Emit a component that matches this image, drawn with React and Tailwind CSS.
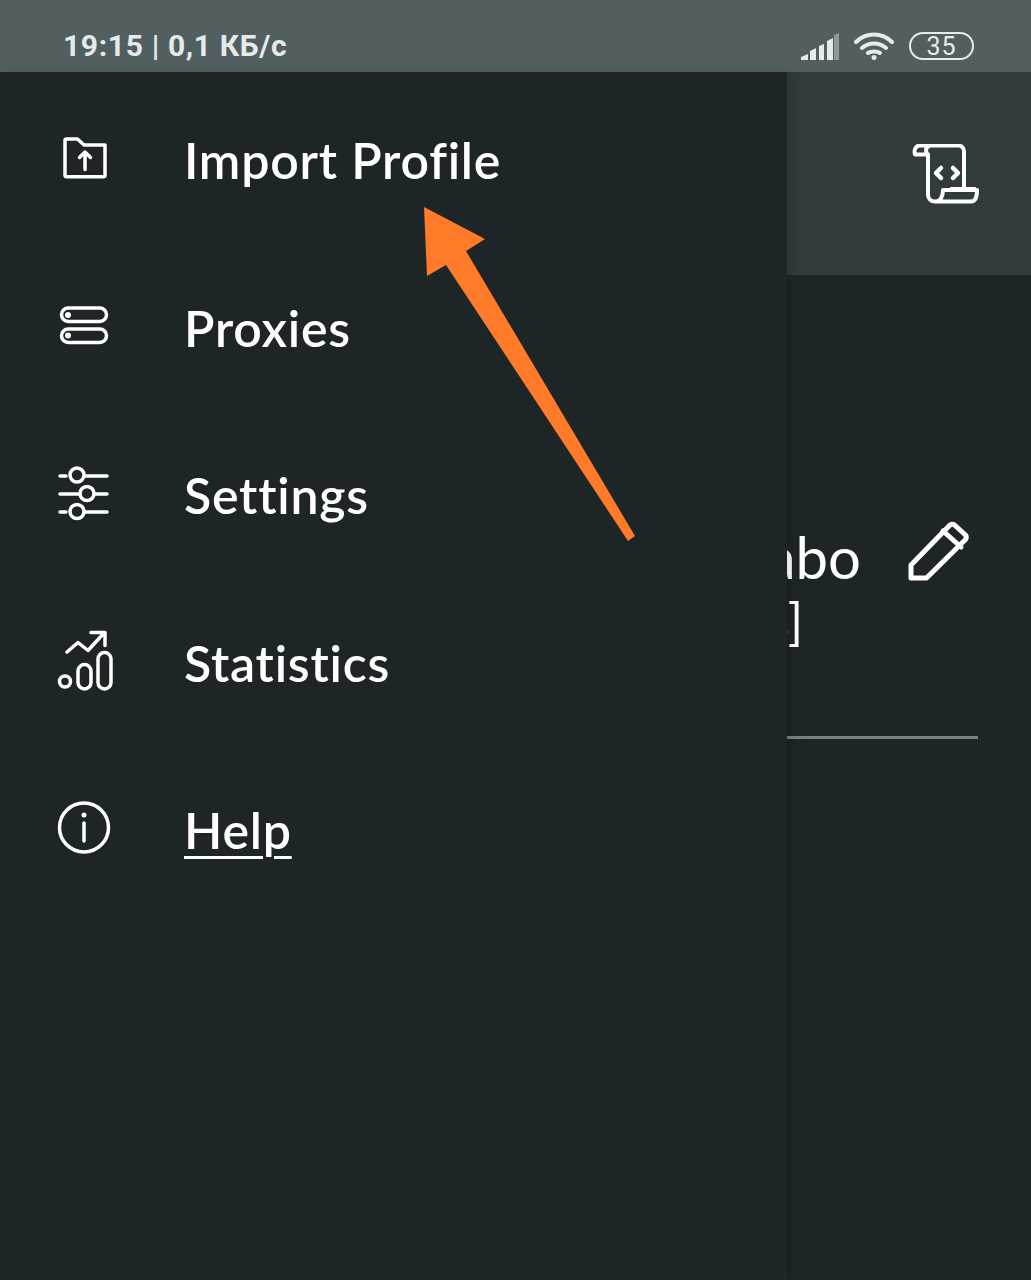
const Icon = ({ box, children }) => (
  <svg viewBox={box} className="w-[70px] h-[70px]" fill="none" stroke="#fff" strokeWidth="3.5" strokeLinecap="round" strokeLinejoin="round">
    {children}
  </svg>
);

const menuItems = [
  {
    label: 'Import Profile',
    icon: (
      <Icon box="50 127 70 70">
        <path d="M65 140.500c0-.8.6-1.500 1.500-1.500h11l6.500 6h21v30c0 1-.7 1.800-1.700 1.800H66.700c-1 0-1.700-.8-1.700-1.800z" />
        <path d="M85 169.500v-17M79.500 157.500l5.500-5.500 5.500 5.500" />
      </Icon>
    )
  },
  {
    label: 'Proxies',
    icon: (
      <Icon box="50 294.500 70 70">
        <rect x="61.500" y="307.500" width="45" height="13.500" rx="6.750" />
        <rect x="61.500" y="328.500" width="45" height="13.500" rx="6.750" />
        <circle cx="68" cy="314.500" r="3" fill="#fff" stroke="none" />
        <circle cx="68" cy="335" r="3" fill="#fff" stroke="none" />
      </Icon>
    )
  },
  {
    label: 'Settings',
    icon: (
      <Icon box="50 462 70 70">
        <path d="M60 476h6M85 476h22M60 494h19M95 494h12M60 512h6M85 512h22" />
        <circle cx="77" cy="475" r="7" />
        <circle cx="87" cy="493.500" r="7" />
        <circle cx="77" cy="511.500" r="7" />
      </Icon>
    )
  },
  {
    label: 'Statistics',
    icon: (
      <Icon box="50 629.500 70 70">
        <circle cx="65" cy="681" r="5.500" />
        <rect x="78" y="664" width="13" height="24.500" rx="6.500" />
        <rect x="98" y="652" width="13" height="36.500" rx="6.500" />
        <path d="M67 651.500l11-9.500 10 8 16.500-18M91 632h14v13" />
      </Icon>
    )
  },
  {
    label: 'Help',
    underline: true,
    icon: (
      <Icon box="50 797 70 70">
        <circle cx="84" cy="827.500" r="24.500" />
        <path d="M84 823v18" />
        <circle cx="84" cy="815" r="2.500" fill="#fff" stroke="none" />
      </Icon>
    )
  }
];

const App = () => {
  return (
    <div className="relative w-[1031px] h-[1280px] overflow-hidden bg-[#1e2527] text-white font-['Lato',sans-serif]">
      {/* status bar */}
      <div className="h-[72px] bg-[#525f60] flex items-center justify-between pt-[20px] pl-[63px] pr-[57px] text-[#e6eaea]">
        <span className="font-['Roboto',sans-serif] font-bold text-[30px] leading-none tracking-[0.65px]">19:15 | 0,1 КБ/с</span>
        <div className="flex items-center gap-[15px]">
          <svg viewBox="0 0 38 27" className="w-[38px] h-[27px]" fill="#e6eaea">
            <path d="M0 27v-3l7-3v6zM9 27v-9l6-3v12zM18 27V13l5-2v16zM26 27V8l6-3v22z" />
            <path d="M33 27V2l5-2v27z" fill="#8f9a9a" />
          </svg>
          <svg viewBox="0 0 40 28" className="w-[40px] h-[28px]" fill="none" stroke="#e6eaea" strokeWidth="4" strokeLinecap="round">
            <path d="M2 10c10-10 26-10 36 0M8 16c7-6 17-6 24 0M14 21c3-2 9-2 12 0" />
            <circle cx="20" cy="25.500" r="2.500" fill="#e6eaea" stroke="none" />
          </svg>
          <div className="w-[65px] h-[28px] border-2 border-[#e6eaea] rounded-full flex items-center justify-center font-['Roboto',sans-serif] text-[25px] leading-none tracking-[1px]">35</div>
        </div>
      </div>

      <div className="flex h-[1208px]">
        {/* drawer */}
        <nav className="w-[787px] shrink-0 pt-[6.5px] z-10 bg-[#1e2527] shadow-[4px_0_10px_rgba(0,0,0,0.12)]">
          {menuItems.map((item) => (
            <div key={item.label} className="h-[167.5px] flex items-center">
              <div className="w-[185px] pl-[50px] shrink-0">{item.icon}</div>
              <span className={`text-[50px] leading-none font-semibold tracking-[0.8px] -ml-[1px] -mt-[4px] ${item.underline ? 'underline underline-offset-[7px] decoration-[3px]' : ''}`}>{item.label}</span>
            </div>
          ))}
        </nav>

        {/* page behind the drawer */}
        <div className="flex-1 min-w-0 overflow-hidden">
          <div className="h-[203px] bg-[#313a3c] flex items-center justify-end pr-[52px]">
            <svg viewBox="912 144 67 60" className="w-[67px] h-[60px]" fill="none" stroke="#fff" strokeWidth="4" strokeLinecap="round" strokeLinejoin="round">
              <path d="M928 154.500h-13c-1.500-5 1-9 5-9h38c4 0 6 3 6 6v37" />
              <path d="M928 147c-3 0-2 7 0 7.500v40c0 4 3 7 7 7h36c4 0 6-4 6-11.500h-34c0 7-3 11.500-7 11.500" />
              <path d="M951 188h24" strokeWidth="2" />
              <path d="M941 168l-5 5 5 5M953 168l5 5-5 5" strokeWidth="4.5" />
            </svg>
          </div>
          <div className="pt-[246px] pr-[53px]">
            <div className="flex justify-between items-start h-[218px] border-b-[3px] border-[#7b7f80]">
              <div className="text-[58px] font-normal leading-[66px] whitespace-nowrap mt-[3px]">
                <div className="w-[74px] flex justify-end">abo</div>
                <div className="w-[16px] flex justify-end text-[50px] font-normal -mt-[2px]">s]</div>
              </div>
              <svg viewBox="908 521 61 60" className="w-[61px] h-[60px] mr-[9px]" fill="none" stroke="#fff" strokeWidth="5" strokeLinecap="round" strokeLinejoin="round">
                <path d="M911 578v-13l39-40c1.500-1 3-1 4.500 0l11 10c1 1.500 1 3 0 4.500l-39 38.500z" />
                <path d="M943 531l18 16" />
              </svg>
            </div>
          </div>
        </div>
      </div>

      {/* annotation arrow drawn over the screenshot */}
      <svg viewBox="0 0 1031 1280" className="absolute inset-0 w-full h-full z-20 pointer-events-none">
        <polygon points="424,207 485,239 466,251 635,536 628,541 446,265 427,276" fill="#ff7a29" />
      </svg>
    </div>
  );
};

export default App;
